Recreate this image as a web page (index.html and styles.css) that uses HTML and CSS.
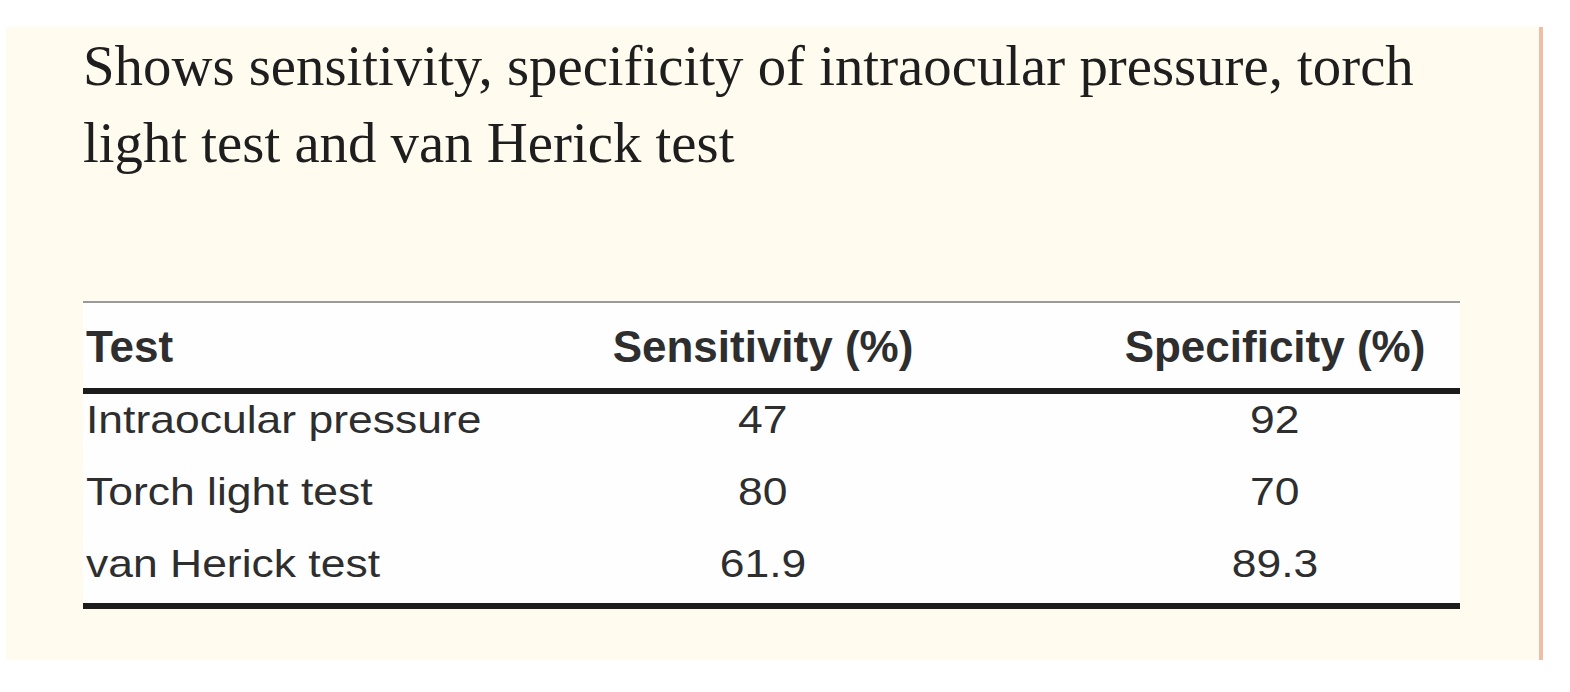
FILE: index.html
```html
<!DOCTYPE html>
<html>
<head>
<meta charset="utf-8">
<link rel="stylesheet" href="styles.css">
</head>
<body>
<div class="panel">
  <h1 class="title">Shows sensitivity, specificity of intraocular pressure, torch light test and van Herick test</h1>
  <div class="table">
    <div class="row head">
      <div class="cell c1">Test</div>
      <div class="cell c2">Sensitivity (%)</div>
      <div class="cell c3">Specificity (%)</div>
    </div>
    <div class="row body">
      <div class="cell c1"><span class="v">Intraocular pressure</span></div>
      <div class="cell c2"><span class="v">47</span></div>
      <div class="cell c3"><span class="v">92</span></div>
    </div>
    <div class="row body">
      <div class="cell c1"><span class="v">Torch light test</span></div>
      <div class="cell c2"><span class="v">80</span></div>
      <div class="cell c3"><span class="v">70</span></div>
    </div>
    <div class="row body last">
      <div class="cell c1"><span class="v">van Herick test</span></div>
      <div class="cell c2"><span class="v">61.9</span></div>
      <div class="cell c3"><span class="v">89.3</span></div>
    </div>
  </div>
</div>
</body>
</html>
```

FILE: styles.css
```css
html, body {
  margin: 0;
  padding: 0;
  background: #ffffff;
}

.panel {
  margin: 27px 0 0 6px;
  width: 1533px;
  height: 633px;
  background: #fffcef;
  border-right: 4px solid #eebfa6;
  overflow: hidden;
}

.title {
  margin: 0 0 0 77px;
  width: 1400px;
  font-family: "Liberation Serif", "Times New Roman", serif;
  font-weight: normal;
  font-size: 56.8px;
  line-height: 77px;
  color: #1e1e1e;
}

.table {
  margin: 120px 0 0 77px;
  width: 1377px;
  background: #fefefe;
  border-top: 2px solid #9a9a96;
  border-bottom: 6px solid #1c1c1c;
  font-family: "Liberation Sans", Arial, sans-serif;
  color: #2e2e2e;
}

.row {
  display: grid;
  grid-template-columns: 353px 654px 370px;
}

.row.head {
  height: 85px;
  line-height: 87px;
  font-size: 44px;
  font-weight: bold;
  border-bottom: 6px solid #1c1c1c;
}

.row.body {
  font-size: 39px;
  line-height: 52px;
  padding-bottom: 20px;
}

.row.body.last {
  padding-bottom: 13px;
}

.cell {
  white-space: nowrap;
}

.c1 {
  padding-left: 3px;
  text-align: left;
}

.c2, .c3 {
  text-align: center;
}

.v {
  display: inline-block;
  transform: scaleX(1.14);
  transform-origin: center;
}

.c1 .v {
  transform-origin: left;
}
```
